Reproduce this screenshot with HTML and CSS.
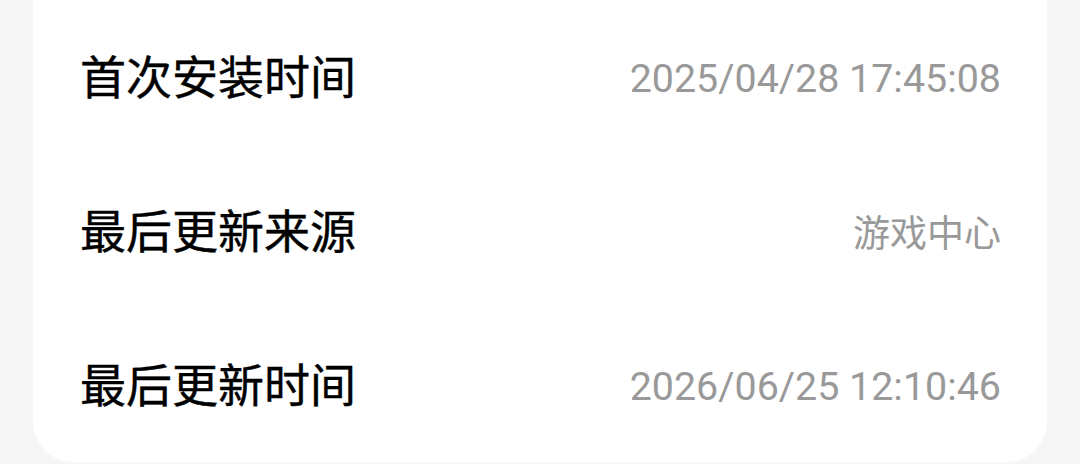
FILE: index.html
```html
<!DOCTYPE html>
<html lang="zh-CN">
<head>
  <meta charset="UTF-8" />
  <title>应用信息</title>
  <link rel="stylesheet" href="styles.css">
</head>
<body>

  <!-- 安装信息卡片 -->
  <section class="info-card">
    <div class="info-row">
      <span class="info-label">首次安装时间</span>
      <span class="info-value">2025/04/28 17:45:08</span>
    </div>
    <div class="info-row">
      <span class="info-label">最后更新来源</span>
      <span class="info-value info-value-text">游戏中心</span>
    </div>
    <div class="info-row">
      <span class="info-label">最后更新时间</span>
      <span class="info-value">2026/06/25 12:10:46</span>
    </div>
  </section>

</body>
</html>
```

FILE: styles.css
```css
body {
  margin: 0;
  background: #f6f6f6;
  font-family: Roboto, "Noto Sans CJK SC", sans-serif;
}
.info-card {
  margin: 0 33px;
  padding: 0 46px 0 47px;
  background: #fff;
  border-radius: 0 0 40px 40px;
}
.info-row {
  height: 154px;
  display: flex;
  align-items: center;
  justify-content: space-between;
}
.info-label {
  font-family: "Noto Sans CJK SC", sans-serif;
  font-size: 46px;
  line-height: 1;
  margin-bottom: 6px;
  color: #000;
  -webkit-text-stroke: 0.4px #000;
}
.info-value {
  font-size: 39.4px;
  line-height: 1;
  margin-top: 3px;
  color: #999;
}
.info-value-text {
  font-family: "Noto Sans CJK SC", sans-serif;
  font-size: 37px;
  margin-top: 0;
}
```
